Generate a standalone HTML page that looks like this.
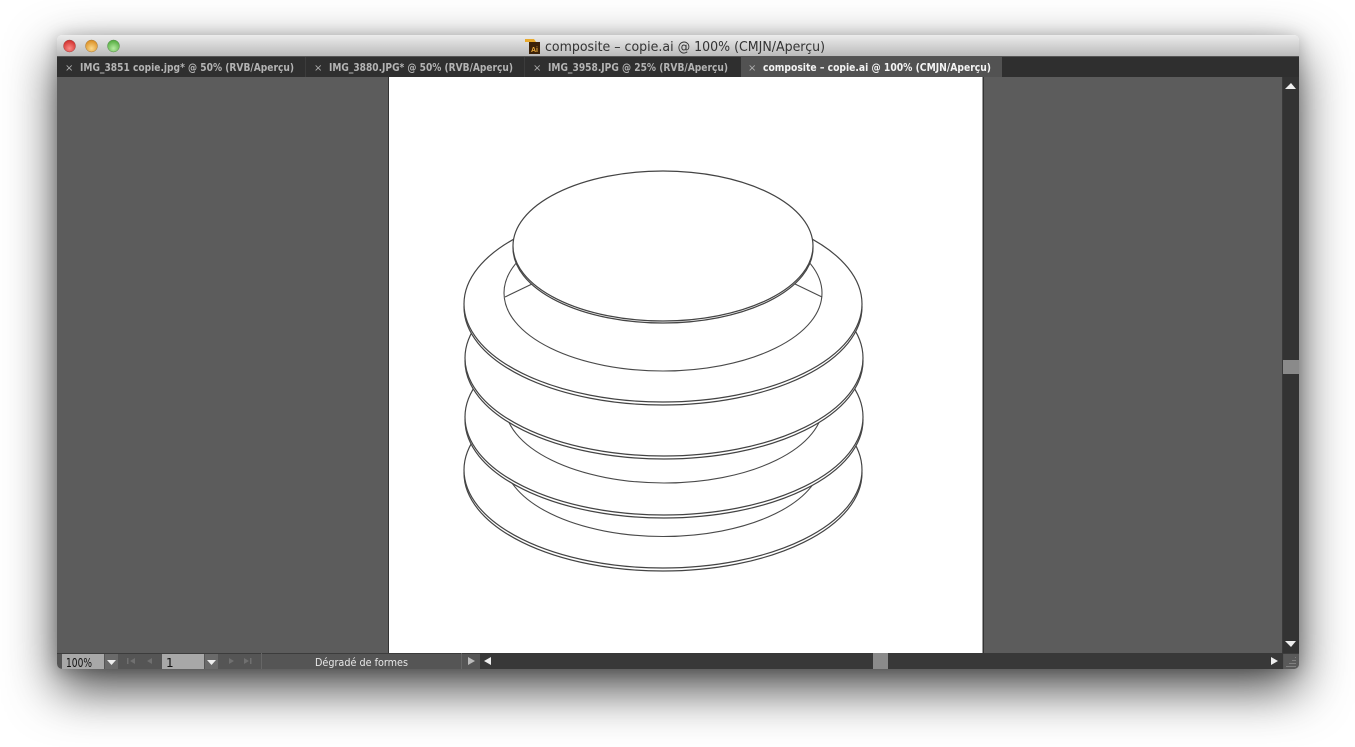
<!DOCTYPE html>
<html><head><meta charset="utf-8"><title>composite</title>
<style>
html,body{margin:0;padding:0;background:#fff;width:1355px;height:747px;overflow:hidden}
#w{position:absolute;left:57px;top:35px;width:1242px;height:634px;border-radius:5px;box-shadow:0 20px 50px rgba(0,0,0,.72),0 2px 16px rgba(0,0,0,.22)}
svg{position:absolute;left:0;top:0;filter:blur(.3px)}
.t{font:bold 10.8px "DejaVu Sans","Liberation Sans",sans-serif;fill:#b4b4b4}
.x{font:10px "DejaVu Sans",sans-serif;fill:#b0b0b0}
.d{fill:#fff;stroke:#444;stroke-width:1.2}
.i{fill:none;stroke:#4a4a4a;stroke-width:1.1}
</style></head><body>
<div id="w"></div>
<svg width="1355" height="747" viewBox="0 0 1355 747">
<defs>
<linearGradient id="tb" x1="0" y1="0" x2="0" y2="1"><stop offset="0" stop-color="#ececec"/><stop offset="1" stop-color="#b8b8b8"/></linearGradient>
<radialGradient id="r" cx=".5" cy=".7" r=".7"><stop offset="0" stop-color="#fb8a85"/><stop offset="1" stop-color="#cf2a28"/></radialGradient>
<radialGradient id="y" cx=".5" cy=".7" r=".7"><stop offset="0" stop-color="#fbd98a"/><stop offset="1" stop-color="#d98a1e"/></radialGradient>
<radialGradient id="g" cx=".5" cy=".7" r=".7"><stop offset="0" stop-color="#b5eba0"/><stop offset="1" stop-color="#4ea83a"/></radialGradient>
<clipPath id="win"><rect x="57" y="35" width="1242" height="634" rx="5"/></clipPath>
</defs>
<g clip-path="url(#win)">
<rect x="57" y="35" width="1242" height="22" fill="url(#tb)"/>
<rect x="57" y="56" width="1242" height="1" fill="#555"/>
<rect x="57" y="57" width="1242" height="20" fill="#2f2f2f"/>
<rect x="741" y="57" width="261" height="20" fill="#525252"/>
<rect x="305" y="57" width="1" height="20" fill="#3c3c3c"/>
<rect x="524" y="57" width="1" height="20" fill="#3c3c3c"/>
<rect x="57" y="77" width="1226" height="576" fill="#5c5c5c"/>
<rect x="388" y="77" width="596" height="576" fill="#333"/>
<rect x="389" y="77" width="593.500" height="576" fill="#fff"/>
<rect x="1283" y="77" width="16" height="576" fill="#333"/>
<rect x="1283" y="360" width="16" height="14" fill="#8a8a8a"/>
<rect x="1282" y="77" width="1" height="576" fill="#3a3a3a"/>
<polygon points="1291,83 1296,89 1285,89" fill="#eee"/>
<polygon points="1291,647 1296,641 1285,641" fill="#eee"/>
<rect x="57" y="653" width="1242" height="16" fill="#555"/>
<rect x="57" y="653" width="1242" height="1" fill="#3c3c3c"/>
<rect x="480" y="653" width="803" height="16" fill="#383838"/>
<rect x="873" y="653" width="15" height="16" fill="#8a8a8a"/>
<rect x="62" y="654" width="42" height="15" fill="#a8a8a8"/>
<rect x="105" y="654" width="13" height="15" fill="#6a6a6a"/>
<rect x="162" y="654" width="42" height="15" fill="#a8a8a8"/>
<rect x="205" y="654" width="13" height="15" fill="#6a6a6a"/>
<rect x="261" y="653" width="1" height="16" fill="#666"/>
<rect x="461" y="653" width="1" height="16" fill="#666"/>
<polygon points="107,660 116,660 111.500,665" fill="#eee"/>
<polygon points="207,660 216,660 211.500,665" fill="#eee"/>
<g fill="#707070">
<rect x="127" y="658" width="1.500" height="6"/><polygon points="135,658 135,664 130,661"/>
<polygon points="152,658 152,664 147,661"/>
<polygon points="229,658 229,664 234,661"/>
<polygon points="244,658 244,664 249,661"/><rect x="250" y="658" width="1.500" height="6"/>
</g>
<polygon points="468,657 468,665 475,661" fill="#bbb"/>
<polygon points="491,657 491,665 484,661" fill="#eee"/>
<polygon points="1271,657 1271,665 1278,661" fill="#eee"/>
<rect x="1284" y="654" width="15" height="15" fill="#5a5a5a"/>
<g stroke="#808080" stroke-width="1"><path d="M1295 657.500h1M1292 660.500h4M1289 663.500h7M1286 666.500h10"/></g>
<circle cx="69.500" cy="46" r="6" fill="url(#r)" stroke="#9a4a48" stroke-width=".5"/>
<circle cx="91.500" cy="46" r="6" fill="url(#y)" stroke="#a07a40" stroke-width=".5"/>
<circle cx="113.500" cy="46" r="6" fill="url(#g)" stroke="#5a8a50" stroke-width=".5"/>
<rect x="529" y="42" width="11" height="12" fill="#3d2208"/>
<path d="M525 39h9l2 3h-11z" fill="#e8a92c"/>
<text x="531" y="52" font-family="Liberation Sans,sans-serif" font-size="7" font-weight="bold" fill="#f0b040">Ai</text>
<text x="545" y="51" font-family="DejaVu Sans,Liberation Sans,sans-serif" font-size="13.500" fill="#333" textLength="280" lengthAdjust="spacingAndGlyphs">composite – copie.ai @ 100% (CMJN/Aperçu)</text>
<text class="x" x="65" y="71">×</text>
<text class="t" x="80" y="71" textLength="214" lengthAdjust="spacingAndGlyphs">IMG_3851 copie.jpg* @ 50% (RVB/Aperçu)</text>
<text class="x" x="314" y="71">×</text>
<text class="t" x="329" y="71" textLength="184" lengthAdjust="spacingAndGlyphs">IMG_3880.JPG* @ 50% (RVB/Aperçu)</text>
<text class="x" x="533" y="71">×</text>
<text class="t" x="548" y="71" textLength="180" lengthAdjust="spacingAndGlyphs">IMG_3958.JPG @ 25% (RVB/Aperçu)</text>
<text class="x" x="748" y="71">×</text>
<text class="t" x="763" y="71" textLength="228" lengthAdjust="spacingAndGlyphs" style="fill:#f4f4f4">composite – copie.ai @ 100% (CMJN/Aperçu)</text>
<text x="66" y="667" font-family="DejaVu Sans,sans-serif" font-size="12" fill="#111" textLength="26" lengthAdjust="spacingAndGlyphs">100%</text>
<text x="166" y="667" font-family="DejaVu Sans,sans-serif" font-size="12" fill="#111">1</text>
<text x="315" y="666" font-family="DejaVu Sans,sans-serif" font-size="11" fill="#e8e8e8" textLength="93" lengthAdjust="spacingAndGlyphs">Dégradé de formes</text>
<!-- bottom disc -->
<ellipse class="d" cx="663" cy="473" rx="199" ry="98"/>
<ellipse class="d" cx="663" cy="470" rx="199" ry="98"/>
<ellipse class="i" cx="663" cy="458.500" rx="159" ry="78"/>
<!-- fourth -->
<ellipse class="d" cx="664" cy="420" rx="199" ry="98"/>
<ellipse class="d" cx="664" cy="417" rx="199" ry="98"/>
<ellipse class="i" cx="664" cy="405" rx="159" ry="78"/>
<!-- third -->
<ellipse class="d" cx="664" cy="361" rx="199" ry="98"/>
<ellipse class="d" cx="664" cy="358" rx="199" ry="98"/>
<!-- second -->
<ellipse class="d" cx="663" cy="307" rx="199" ry="98"/>
<ellipse class="d" cx="663" cy="304" rx="199" ry="98"/>
<ellipse class="i" cx="663" cy="293" rx="159" ry="78"/>
<path class="i" d="M505 297L532 284M795 284L822 297"/>
<!-- top -->
<ellipse class="d" cx="663" cy="248" rx="150" ry="75"/>
<ellipse class="d" cx="663" cy="246" rx="150" ry="75"/>
</g>
</svg>
</body></html>
